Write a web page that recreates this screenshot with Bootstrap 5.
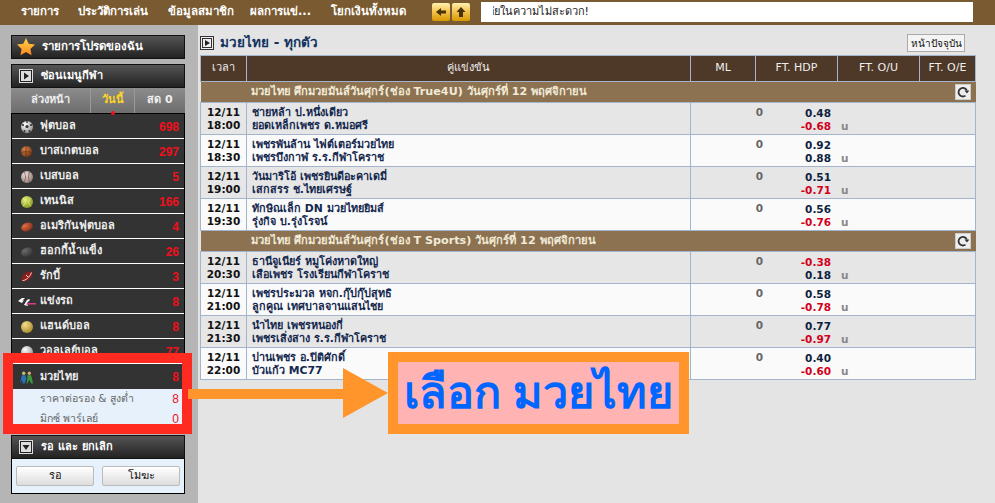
<!DOCTYPE html>
<html lang="th"><head><meta charset="utf-8"><title>มวยไทย</title>
<link href="https://cdn.jsdelivr.net/npm/bootstrap@5.3.0/dist/css/bootstrap.min.css" rel="stylesheet">
<style>
html,body{height:503px;overflow:hidden}
body{width:995px;background:#e4e4e4;font-family:"DejaVu Sans","Noto Sans",sans-serif;font-size:11px;position:relative;color:#10203f}
svg{display:block;flex:none}
.topbar{height:25px;background:#7a5b31;padding:2px 22px 3px 21px;color:#fff;font-weight:700;font-size:11.5px}
.topnav span{white-space:nowrap}
.n1{width:57px}.n2{width:90px}.n3{width:82px}.n4{width:81px}.n5{width:101px}
.ybtn{width:18px;height:18px;background:linear-gradient(#fff2b0,#f2c552 45%,#d99800);border-radius:2px;margin-right:2px}
.ticker{width:492px;height:20px;background:#fff;margin-left:9px;color:#222;font-weight:500;font-size:11px;padding-left:12px;line-height:20px}
.ticker div{width:96px;overflow:hidden;white-space:nowrap}
.shell{height:478px}
.side{width:198px;background:#b5b5b5;padding:10px 13px 0 11px;flex:none;height:478px;overflow:hidden}
.phead{height:24px;background:linear-gradient(#555,#222);color:#fff;font-weight:700;font-size:11.5px;border:1px solid #111;padding-left:5px;gap:7px}
.phead.sm{font-size:11px;padding-left:7px;gap:8px}
.tabs{height:25px;background:linear-gradient(#8c8c8c,#6d6d6d);color:#eee;font-weight:700;font-size:11px;position:relative}
.tabs>div{text-align:center;line-height:24px;border-right:1px solid #999}
.tabs>div:last-child{border:0}
.t1{width:80px}.t2{width:44px;color:#ffd426}.t3{flex:1}
.tabs::after{content:"";position:absolute;left:100px;bottom:-2px;width:4px;height:4px;border-radius:50%;background:#f0101c}
.sports{background:#333;border:1px solid #000;border-bottom:0}
.srow{height:25px;border-bottom:1px solid #fff;color:#eee;font-weight:700;font-size:11px;padding:1px 5px 0 7px}
.srow:last-child{border-bottom:0}
.ico{width:21px;display:flex;justify-content:center;flex:none;padding-right:6px}
.cnt{margin-left:auto;color:#f0101c;font-family:"Liberation Sans",sans-serif;font-size:12px;font-weight:700}
.sub{background:#e6f1fb;color:#666;font-size:10.5px;font-weight:500;padding:0 5px 0 28px;height:20px}
.sub .cnt{font-weight:400}
.subgroup{background:#e6f1fb;border:1px solid #000;border-top:0;border-bottom:0;height:41px}
.wait{margin-top:5px}
.waitbody{height:35px;background:#e6f1fb;border:1px solid #000;border-top:0;gap:8px;padding:0 0 0 4px}
.wbtn{flex:none;width:78px;height:20px;padding:0;border:1px solid #bbb;border-radius:2px;background:linear-gradient(#fff,#ddd);color:#111;font-size:11px;font-weight:500;line-height:18px}
.main{padding:9px 20px 0 2px;flex:1;min-width:0}
.ttl{height:21px;color:#12335f;font-size:13.5px;font-weight:700;gap:6px}
.nowbtn{margin-left:auto;margin-right:10px;width:58px;height:18px;border:1px solid #aaa;background:#f4f4f4;padding:0;font-size:10px;font-weight:500;color:#111;line-height:15px}
.odds{table-layout:fixed;width:775px;border-collapse:collapse;margin:0}
.odds td,.odds th{border:1px solid #a3b5cd;padding:0;font-size:11px;vertical-align:middle}
.odds thead th{background:#4e3828;color:#eee;height:26px;text-align:center;font-weight:500}
.grp td{background:#8c7250;color:#f1ead9;font-weight:700;height:21px;padding:1px 0 0 50px;border-left:0;border-right:0;position:relative;font-size:11.200px}
.rf{position:absolute;right:5px;top:2px;width:16px;height:16px;background:#eee;border:1px solid #ccc;display:flex;align-items:center;justify-content:center}
.rw td{height:32px;line-height:13.500px;font-weight:500;background:#fafafa;padding-top:1px}
.rw.alt td{background:#e6e6e6}
.tm{text-align:center;font-weight:700!important;color:#111;font-size:10.5px!important}
.odds .mt{padding-left:5px;color:#14284e;font-weight:600;font-size:10.800px}
.line{display:flex;height:29px;padding-top:2px;font-weight:700;font-size:10.5px;color:#0e1f3f;overflow:hidden}
.zero{width:72px;text-align:right;color:#666;line-height:11px;flex:none}
.nums{width:68px;text-align:right;flex:none}
.nums div{height:13px;line-height:13px}
.uu{color:#888;margin:13px 0 0 10px;line-height:13px}
.neg{color:#d2001a}
.line .neg{color:#d2001a}
.frame{position:absolute;left:3px;top:353px;width:189px;height:81px;border:10px solid #ff2a20;pointer-events:none}
.arrow{position:absolute;left:188px;top:367px}
.callout{position:absolute;left:388px;top:352px;width:301px;height:82px;background:#ffb3b3;border:10px solid #ff952b;color:#0066ff;font-size:45px;font-weight:700;text-align:center;line-height:58px;white-space:nowrap;font-family:"Noto Sans",sans-serif}
</style></head>
<body>
<svg width="0" height="0" style="position:absolute"><defs>
<radialGradient id="gW" cx=".35" cy=".3" r=".8"><stop offset="0" stop-color="#fff"/><stop offset="1" stop-color="#8a8a8a"/></radialGradient>
<radialGradient id="gB" cx=".35" cy=".3" r=".8"><stop offset="0" stop-color="#d9824a"/><stop offset="1" stop-color="#6e3010"/></radialGradient>
<radialGradient id="gS" cx=".35" cy=".3" r=".8"><stop offset="0" stop-color="#e8e0dc"/><stop offset="1" stop-color="#857a76"/></radialGradient>
<radialGradient id="gT" cx=".35" cy=".3" r=".8"><stop offset="0" stop-color="#e3ec7a"/><stop offset="1" stop-color="#7f9418"/></radialGradient>
<radialGradient id="gA" cx=".35" cy=".3" r=".8"><stop offset="0" stop-color="#e06c44"/><stop offset="1" stop-color="#7f2a18"/></radialGradient>
<radialGradient id="gH" cx=".35" cy=".3" r=".8"><stop offset="0" stop-color="#6a6a6a"/><stop offset="1" stop-color="#333"/></radialGradient>
<radialGradient id="gN" cx=".35" cy=".3" r=".8"><stop offset="0" stop-color="#f4e08a"/><stop offset="1" stop-color="#a8842a"/></radialGradient>
<linearGradient id="st" x1="0" y1="0" x2="0" y2="1"><stop offset="0" stop-color="#ffd24a"/><stop offset="1" stop-color="#ff8a1e"/></linearGradient>
<symbol id="rfi" viewBox="0 0 12 12"><path d="M8.500 9.600A4.300 4.300 0 1 1 9.800 4.500" fill="none" stroke="#333" stroke-width="1.800"/><path d="M7.500 4.500h4.800L9.900 7.500z" fill="#333"/></symbol>
</defs></svg>
<div class="topbar d-flex align-items-center">
  <div class="topnav d-flex">
    <span class="n1">รายการ</span><span class="n2">ประวัติการเล่น</span><span class="n3">ข้อมูลสมาชิก</span><span class="n4">ผลการแข่...</span><span class="n5">โยกเงินทั้งหมด</span>
  </div>
  <div class="ybtn d-flex align-items-center justify-content-center"><svg width="12" height="10" viewBox="0 0 12 10"><path d="M1 5 6 1v2.500h5v3H6V9z" fill="#4a3208"/></svg></div>
  <div class="ybtn d-flex align-items-center justify-content-center"><svg width="10" height="12" viewBox="0 0 10 12"><path d="M5 1 9.500 6H7v5H3V6H.5z" fill="#4a3208"/></svg></div>
  <div class="ticker"><div class="d-flex justify-content-end">ขออภัยในความไม่สะดวก!</div></div>
</div>
<div class="shell d-flex">
  <aside class="side">
    <div class="phead d-flex align-items-center"><svg width="18" height="18" viewBox="0 0 18 18"><path d="M9 0l2.700 5.800 6.300.8-4.600 4.300 1.200 6.300L9 14.100l-5.600 3.100 1.200-6.300L0 6.600l6.300-.8z" fill="url(#st)"/></svg>รายการโปรดของฉัน</div>
    <div class="phead sm d-flex align-items-center" style="margin-top:5px"><svg width="14" height="14" viewBox="0 0 14 14"><rect x=".5" y=".5" width="13" height="13" fill="#222" stroke="#ddd"/><rect x="2" y="2" width="10" height="10" fill="#ddd"/><path d="M5 3.500 10 7 5 10.500z" fill="#222"/></svg>ซ่อนเมนูกีฬา</div>
    <div class="tabs d-flex"><div class="t1">ล่วงหน้า</div><div class="t2">วันนี้</div><div class="t3">สด 0</div></div>
    <div class="sports">
      <div class="srow d-flex align-items-center"><span class="ico"><svg width="12" height="12" viewBox="0 0 12 12"><circle cx="6" cy="6" r="6" fill="url(#gW)"/><circle cx="6" cy="5.500" r="1.600" fill="#333"/><circle cx="2" cy="4" r="1.100" fill="#333"/><circle cx="10" cy="4" r="1.100" fill="#333"/><circle cx="3.500" cy="10" r="1.100" fill="#333"/><circle cx="8.500" cy="10" r="1.100" fill="#333"/><circle cx="6" cy="1" r=".9" fill="#333"/></svg></span>ฟุตบอล<span class="cnt">698</span></div>
      <div class="srow d-flex align-items-center"><span class="ico"><svg width="11" height="11" viewBox="0 0 12 12"><circle cx="6" cy="6" r="6" fill="url(#gB)"/><path d="M0 7c4-1 8-1 12 0M6 0c-1 4-1 8 0 12" stroke="#5a2d10" stroke-width=".7" fill="none"/></svg></span>บาสเกตบอล<span class="cnt">297</span></div>
      <div class="srow d-flex align-items-center"><span class="ico"><svg width="12" height="12" viewBox="0 0 12 12"><circle cx="6" cy="6" r="6" fill="url(#gS)"/><path d="M3 1c2 3 2 7 0 10M9 1c-2 3-2 7 0 10" stroke="#9a4d44" stroke-width=".8" fill="none"/></svg></span>เบสบอล<span class="cnt">5</span></div>
      <div class="srow d-flex align-items-center"><span class="ico"><svg width="12" height="12" viewBox="0 0 12 12"><circle cx="6" cy="6" r="6" fill="url(#gT)"/><path d="M2 2c3 2 3 6 0 8M10 2c-3 2-3 6 0 8" stroke="#e7ef9c" stroke-width=".6" fill="none"/></svg></span>เทนนิส<span class="cnt">166</span></div>
      <div class="srow d-flex align-items-center"><span class="ico"><svg width="12" height="10" viewBox="0 0 12 10"><ellipse cx="6" cy="5" rx="6" ry="4.200" transform="rotate(-20 6 5)" fill="url(#gA)"/></svg></span>อเมริกันฟุตบอล<span class="cnt">4</span></div>
      <div class="srow d-flex align-items-center"><span class="ico"><svg width="12" height="10" viewBox="0 0 12 10"><ellipse cx="6" cy="5" rx="6" ry="4.500" transform="rotate(-15 6 5)" fill="url(#gH)"/></svg></span>ฮอกกี้น้ำแข็ง<span class="cnt">26</span></div>
      <div class="srow d-flex align-items-center"><span class="ico"><svg width="12" height="11" viewBox="0 0 12 11"><ellipse cx="6" cy="5.500" rx="6.500" ry="3.800" transform="rotate(-38 6 5.500)" fill="#8c1f1c"/><path d="M1.500 9.500C4 10 9 6 10.500 1.500M5 4l2 2" stroke="#f4dcd8" fill="none"/></svg></span>รักบี้<span class="cnt">3</span></div>
      <div class="srow d-flex align-items-center"><span class="ico"><svg width="18" height="11" viewBox="0 0 18 11"><path d="M0 5l4-3h3L4 5l2-1-2 3zM6 9l3-5 2-1 1 1-3 3 1 3z" fill="#fff"/><path d="M9 7h9v1.500H8z" fill="#d83a8c"/></svg></span>แข่งรถ<span class="cnt">8</span></div>
      <div class="srow d-flex align-items-center"><span class="ico"><svg width="12" height="12" viewBox="0 0 12 12"><circle cx="6" cy="6" r="6" fill="url(#gN)"/></svg></span>แฮนด์บอล<span class="cnt">8</span></div>
      <div class="srow d-flex align-items-center"><span class="ico"><svg width="12" height="12" viewBox="0 0 12 12"><circle cx="6" cy="6" r="6" fill="url(#gW)"/></svg></span>วอลเลย์บอล<span class="cnt">77</span></div>
      <div class="srow d-flex align-items-center"><span class="ico"><svg width="15" height="13" viewBox="0 0 16 13"><circle cx="5" cy="2" r="1.800" fill="#b8c46f"/><circle cx="11" cy="2" r="1.800" fill="#d9a66f"/><path d="M3 4h4l1 4-2 5H4l-1-4-2 4z" fill="#2c6fb5"/><path d="M9 4h4l2 9h-2l-2-4-2 4H8l1-5z" fill="#3c9a3c"/></svg></span>มวยไทย<span class="cnt">8</span></div>
    </div>
    <div class="subgroup">
      <div class="sub d-flex align-items-center">ราคาต่อรอง &amp; สูงต่ำ<span class="cnt">8</span></div>
      <div class="sub d-flex align-items-center">มิกซ์ พาร์เลย์<span class="cnt">0</span></div>
    </div>
    <div class="phead sm wait d-flex align-items-center"><svg width="14" height="14" viewBox="0 0 14 14"><rect x=".5" y=".5" width="13" height="13" fill="#222" stroke="#ddd"/><rect x="2" y="2" width="10" height="10" fill="#ddd"/><path d="M3.500 5 7 10l3.500-5z" fill="#222"/></svg>รอ และ ยกเลิก</div>
    <div class="waitbody d-flex align-items-center"><button class="wbtn btn">รอ</button><button class="wbtn btn">โมฆะ</button></div>
  </aside>
  <main class="main">
    <div class="ttl d-flex align-items-start"><svg width="14" height="14" viewBox="0 0 14 14" style="margin-top:2px"><rect x=".5" y=".5" width="13" height="13" fill="#eee" stroke="#333"/><rect x="2.500" y="2.500" width="9" height="9" fill="none" stroke="#333"/><path d="M5 4 10 7 5 10z" fill="#222"/></svg><span style="line-height:17px">มวยไทย - ทุกตัว</span><button class="nowbtn btn rounded-0">หน้าปัจจุบัน</button></div>
    <table class="odds">
      <colgroup><col style="width:46px"><col style="width:444px"><col style="width:65px"><col style="width:82px"><col style="width:82px"><col style="width:56px"></colgroup>
      <thead><tr><th>เวลา</th><th>คู่แข่งขัน</th><th>ML</th><th>FT. HDP</th><th>FT. O/U</th><th>FT. O/E</th></tr></thead>
      <tbody>
        <tr class="grp"><td colspan="6">มวยไทย ศึกมวยมันส์วันศุกร์(ช่อง True4U) วันศุกร์ที่ 12 พฤศจิกายน<span class="rf"><svg width="12" height="12"><use href="#rfi"/></svg></span></td></tr>
        <tr class="rw alt"><td class="tm">12/11<br>18:00</td><td class="mt">ชายหล้า ป.หนึ่งเดียว<br>ยอดเหล็กเพชร ด.หมอศรี</td><td colspan="4"><div class="line"><div class="zero">0</div><div class="nums"><div>0.48</div><div class="neg">-0.68</div></div><div class="uu">u</div></div></td></tr>
        <tr class="rw"><td class="tm">12/11<br>18:30</td><td class="mt">เพชรพันล้าน ไฟต์เตอร์มวยไทย<br>เพชรบึงกาฬ ร.ร.กีฬาโคราช</td><td colspan="4"><div class="line"><div class="zero">0</div><div class="nums"><div>0.92</div><div>0.88</div></div><div class="uu">u</div></div></td></tr>
        <tr class="rw alt"><td class="tm">12/11<br>19:00</td><td class="mt">วันมาริโอ้ เพชรยินดีอะคาเดมี่<br>เสกสรร ช.ไทยเศรษฐ์</td><td colspan="4"><div class="line"><div class="zero">0</div><div class="nums"><div>0.51</div><div class="neg">-0.71</div></div><div class="uu">u</div></div></td></tr>
        <tr class="rw"><td class="tm">12/11<br>19:30</td><td class="mt">ทักษิณเล็ก DN มวยไทยยิมส์<br>รุ่งกิจ บ.รุ่งโรจน์</td><td colspan="4"><div class="line"><div class="zero">0</div><div class="nums"><div>0.56</div><div class="neg">-0.76</div></div><div class="uu">u</div></div></td></tr>
        <tr class="grp"><td colspan="6">มวยไทย ศึกมวยมันส์วันศุกร์(ช่อง T Sports) วันศุกร์ที่ 12 พฤศจิกายน<span class="rf"><svg width="12" height="12"><use href="#rfi"/></svg></span></td></tr>
        <tr class="rw alt"><td class="tm">12/11<br>20:30</td><td class="mt">ธานีจูเนียร์ หมูโค่งหาดใหญ่<br>เสือเพชร โรงเรียนกีฬาโคราช</td><td colspan="4"><div class="line"><div class="zero">0</div><div class="nums"><div class="neg">-0.38</div><div>0.18</div></div><div class="uu">u</div></div></td></tr>
        <tr class="rw"><td class="tm">12/11<br>21:00</td><td class="mt">เพชรประมวล หจก.กุ๊ปกุ๊ปสุทธิ<br>ลูกคูณ เทศบาลจานแสนไชย</td><td colspan="4"><div class="line"><div class="zero">0</div><div class="nums"><div>0.58</div><div class="neg">-0.78</div></div><div class="uu">u</div></div></td></tr>
        <tr class="rw alt"><td class="tm">12/11<br>21:30</td><td class="mt">นำไทย เพชรหนองกี่<br>เพชรเสิ่งสาง ร.ร.กีฬาโคราช</td><td colspan="4"><div class="line"><div class="zero">0</div><div class="nums"><div>0.77</div><div class="neg">-0.97</div></div><div class="uu">u</div></div></td></tr>
        <tr class="rw"><td class="tm">12/11<br>22:00</td><td class="mt">ปานเพชร อ.ปิติศักดิ์<br>บัวแก้ว MC77</td><td colspan="4"><div class="line"><div class="zero">0</div><div class="nums"><div>0.40</div><div class="neg">-0.60</div></div><div class="uu">u</div></div></td></tr>
      </tbody>
    </table>
  </main>
</div>
<div class="frame"></div>
<svg class="arrow" width="200" height="52" viewBox="0 0 200 52"><path d="M0 22h155V1l45 25-45 25V32H0z" fill="#ff952b"/></svg>
<div class="callout">เลือก มวยไทย</div>
<script src="https://cdn.jsdelivr.net/npm/bootstrap@5.3.0/dist/js/bootstrap.bundle.min.js"></script>
</body></html>
